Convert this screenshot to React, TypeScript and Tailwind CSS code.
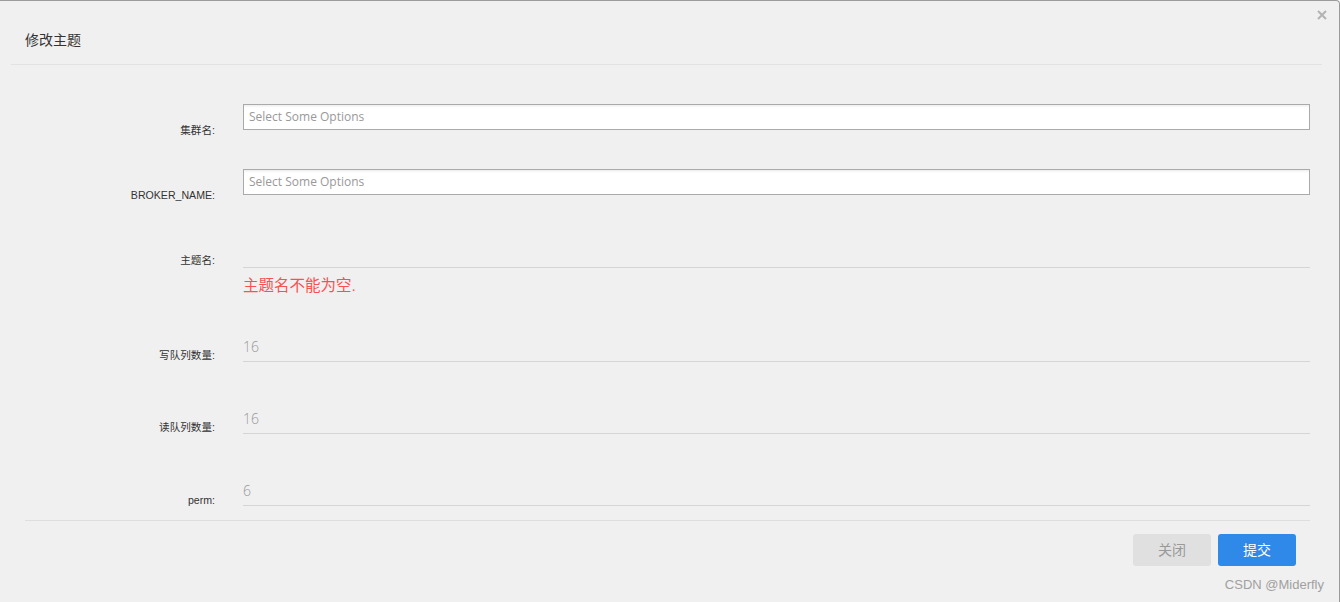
import React from "react";

const CJK = "font-['Microsoft_YaHei','Liberation_Sans','Noto_Sans_CJK_SC',sans-serif]";

type Row = {
  label: string;
  kind: "select" | "text";
  value?: string;
  rowMt: string;
  labelMt: string;
};

const rows: Row[] = [
  { label: "集群名:", kind: "select", rowMt: "mt-[39px]", labelMt: "mt-[18px]" },
  { label: "BROKER_NAME:", kind: "select", rowMt: "mt-[39px]", labelMt: "mt-[18px]" },
  { label: "主题名:", kind: "text", value: "", rowMt: "mt-[47px]", labelMt: "mt-[10px]" },
];

const numberRows: Row[] = [
  { label: "写队列数量:", kind: "text", value: "16", rowMt: "mt-[40px]", labelMt: "mt-[11px]" },
  { label: "读队列数量:", kind: "text", value: "16", rowMt: "mt-[46px]", labelMt: "mt-[11px]" },
  { label: "perm:", kind: "text", value: "6", rowMt: "mt-[46px]", labelMt: "mt-[12px]" },
];

function FieldRow({ row }: { row: Row }) {
  return (
    <div className={`flex h-[26px] items-start ${row.rowMt}`}>
      <label
        className={`w-[215px] shrink-0 text-right text-[10.6px] leading-[16px] text-[#333] ${row.labelMt}`}
      >
        {row.label}
      </label>
      <div className="ml-[28px] mr-[29px] flex-1">
        {row.kind === "select" ? (
          <div className="h-[26px] border border-[#aaa] bg-white bg-gradient-to-b from-[#eeeeee] from-0% to-white to-[12%] pl-[5px] text-[12px] leading-[24px] text-[#999] font-['Open_Sans','Liberation_Sans',sans-serif]">
            Select Some Options
          </div>
        ) : (
          <input
            type="text"
            defaultValue={row.value}
            className="block h-[26px] w-full border-b border-[#d5d5d5] bg-transparent pb-[4px] text-[14px] font-light text-[#999] outline-none font-['Open_Sans','Liberation_Sans',sans-serif]"
          />
        )}
      </div>
    </div>
  );
}

export default function App() {
  return (
    <div className={`relative h-[602px] w-[1340px] overflow-hidden rounded-tr-[4px] border-t border-r border-[#9b9b9b] bg-[#f0f0f0] ${CJK}`}>
      <button
        type="button"
        aria-label="close"
        className="absolute right-[12px] top-[9px] flex h-[10px] w-[10px] items-center justify-center"
      >
        <svg viewBox="0 0 10 10" className="h-[10px] w-[10px]">
          <path d="M1 1 L9 9 M9 1 L1 9" stroke="#b3b3b3" strokeWidth="2" />
        </svg>
      </button>

      <div className="ml-[11px] mr-[17px] flex h-[64px] items-end border-b border-[#e2e2e2] pb-[14px] pl-[14px]">
        <h3 className="text-[14px] leading-[20px] text-[#333]">修改主题</h3>
      </div>

      <form>
        {rows.map((r) => (
          <FieldRow key={r.label} row={r} />
        ))}
        <div className="ml-[243px] mt-[8px] text-[15.5px] leading-[20px] text-[#fa5050]">
          主题名不能为空.
        </div>
        {numberRows.map((r) => (
          <FieldRow key={r.label} row={r} />
        ))}
      </form>

      <div className="ml-[25px] mr-[29px] mt-[14px] border-t border-[#dedede]" />

      <div className="mr-[43px] mt-[13px] flex justify-end gap-[7px]">
        <button
          type="button"
          className="h-[32px] w-[78px] rounded-[3px] bg-[#e0e0e0] text-[14px] text-[#999]"
        >
          关闭
        </button>
        <button
          type="button"
          className="h-[32px] w-[78px] rounded-[3px] bg-[#2f89e8] text-[14px] text-white"
        >
          提交
        </button>
      </div>

      <div className="absolute bottom-[9px] right-[15px] text-[13px] leading-[16px] text-[#a0a0a0] font-['Liberation_Sans',sans-serif]">
        CSDN @Miderfly
      </div>
    </div>
  );
}
